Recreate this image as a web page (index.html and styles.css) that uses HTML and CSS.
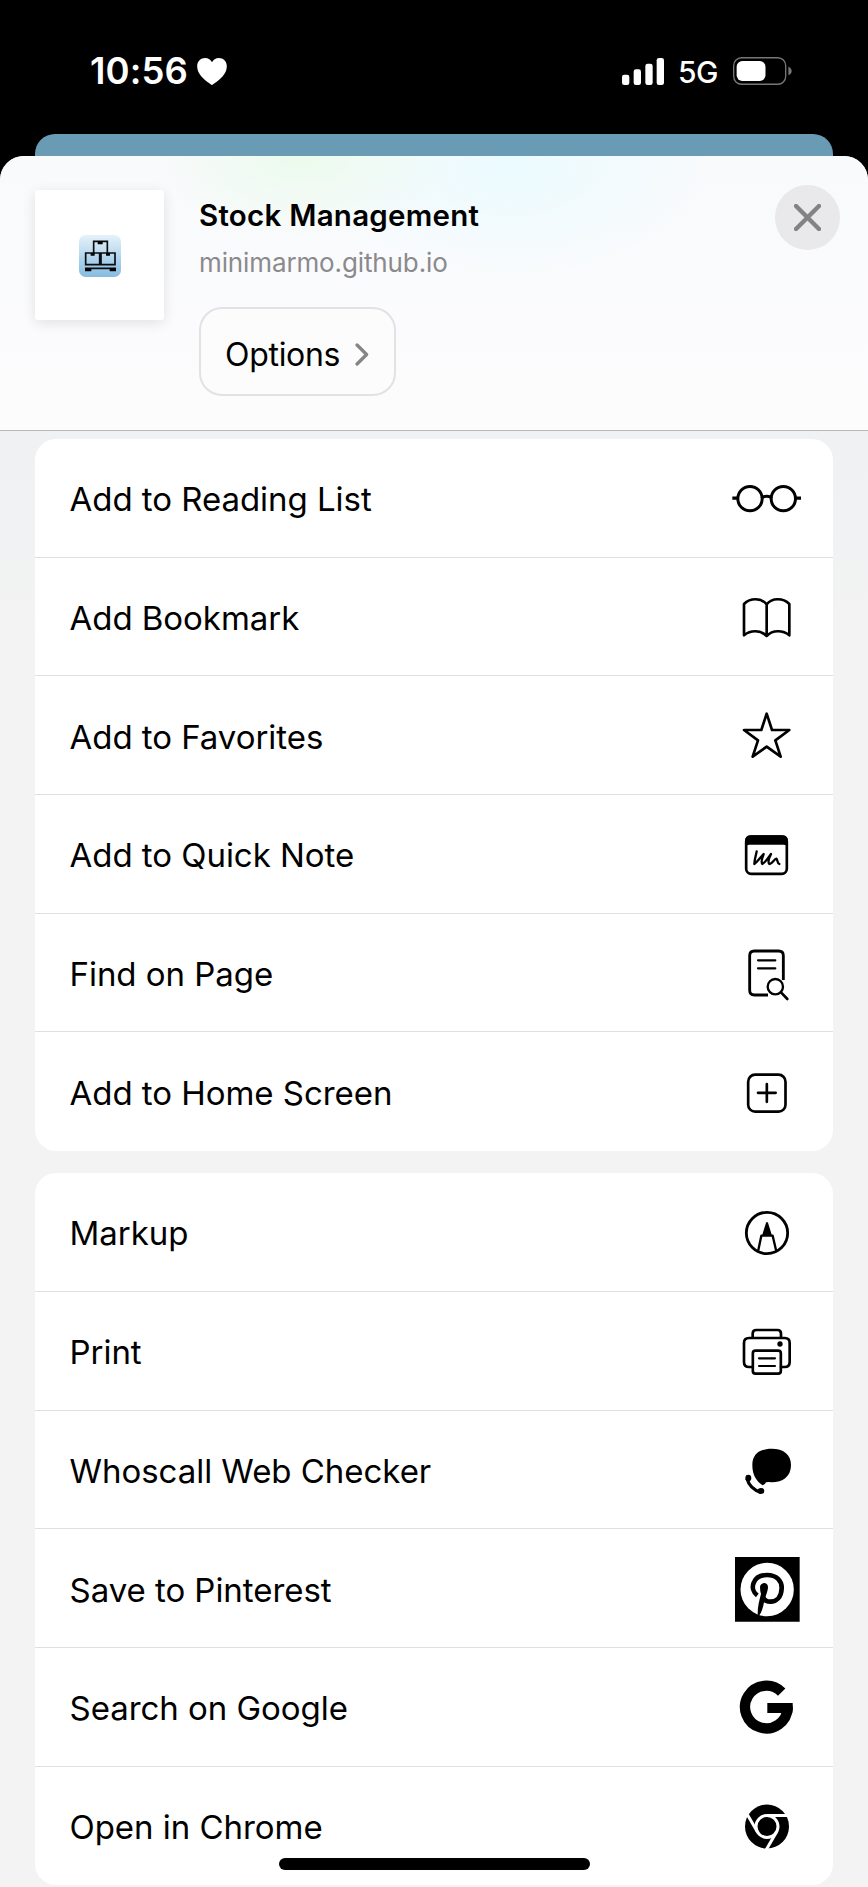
FILE: index.html
```html
<!DOCTYPE html>
<html lang="en">
<head>
<meta charset="utf-8">
<title>Share Sheet</title>
<link rel="stylesheet" href="styles.css">
</head>
<body>
<div class="screen">
  <header class="status">
    <div class="clock"><span class="time">10:56</span>
      <svg class="heart" viewBox="0 0 90 82"><path d="M45 82C38 77 0 56 0 25 0 10 11 0 24 0 34 0 41 5 45 13 49 5 56 0 66 0 79 0 90 10 90 25 90 56 52 77 45 82Z"/></svg>
    </div>
    <div class="indicators">
      <svg class="signal" viewBox="0 0 126 81"><rect y="50" width="22" height="31" rx="7"/><rect x="35" y="34" width="22" height="47" rx="7"/><rect x="70" y="17" width="22" height="64" rx="7"/><rect x="104" width="22" height="81" rx="7"/></svg>
      <span class="network">5G</span>
      <svg class="battery" viewBox="0 0 178 84"><rect class="shell" x="2" y="2" width="157" height="80" rx="24"/><rect x="11" y="12" width="87" height="60" rx="17"/><path class="cap" d="M167 29Q177 33 177 42T167 55Z"/></svg>
    </div>
  </header>
  <div class="back-card"></div>
  <main class="sheet">
    <section class="summary">
      <div class="thumb">
        <svg viewBox="0 0 126 126">
          <defs><linearGradient id="sky" x2="0" y2="1"><stop offset="0" stop-color="#e6f2f9"/><stop offset="1" stop-color="#85bce2"/></linearGradient></defs>
          <rect width="126" height="126" rx="20" fill="url(#sky)"/>
          <g fill="none" stroke="#090d10" stroke-width="5"><path d="M44 54V19H85V54M20 54H62V89H20ZM66 54H108V89H66ZM18 100H111"/></g>
          <path d="M56 19H71V28H56ZM35 54H47V62H35ZM81 54H93V62H81ZM18 100H37V109H18ZM92 100H111V109H92Z"/>
        </svg>
      </div>
      <div class="details">
        <h1 class="title">Stock Management</h1>
        <p class="host">minimarmo.github.io</p>
        <button class="options"><span>Options</span><svg viewBox="0 0 42 70"><path d="M6 6 35 35 6 64"/></svg></button>
      </div>
      <button class="close" aria-label="Close"><svg viewBox="0 0 80 80"><path d="M6 6 74 74M74 6 6 74"/></svg></button>
    </section>
    <div class="lists">
      <ul class="group">
        <li class="row"><span>Add to Reading List</span>
          <svg class="icon" viewBox="87 85 228 240"><g stroke-width="9"><circle cx="150" cy="207" r="36.500"/><circle cx="250" cy="207" r="36.500"/><path d="M187 203Q200 196 213 203"/><path stroke-width="10" d="M97 205.500H113M287 205.500H303" stroke-linecap="butt"/></g></svg></li>
        <li class="row"><span>Add Bookmark</span>
          <svg class="icon" viewBox="87 441 228 240"><path d="M200 523C184 503 151 503 132 522V616C151 600 182 599 200 618 218 599 249 600 268 616V522C249 503 216 503 200 523ZM200 523V618"/></svg></li>
        <li class="row"><span>Add to Favorites</span>
          <svg class="icon" viewBox="87 797 228 240"><path d="M200 850 216 899H268L226 930 242 979 200 949 158 979 174 930 132 899H184Z"/></svg></li>
        <li class="row"><span>Add to Quick Note</span>
          <svg class="icon" viewBox="87 72 228 240"><rect x="138.500" y="139.500" width="122" height="112" rx="15"/><path class="solid" d="M135 166V153Q135 136 152 136H247Q264 136 264 153V170Q260 164 251 164H148Q139 164 135 170Z"/><path stroke-width="7" d="M170 184C168 196 163 210 163 222 171 217 183 200 191 192 187 202 182 216 187 222 195 219 207 200 213 192 208 202 203 217 208 222 215 224 223 206 229 206 233 208 231 220 238 222"/></svg></li>
        <li class="row"><span>Find on Page</span>
          <svg class="icon" viewBox="87 428 228 240"><path stroke-width="8.500" stroke-linecap="butt" d="M204 614H163Q149 614 149 600V496Q149 482 163 482H236Q250 482 250 496V569"/><path d="M174 510H226M174 534H226" stroke-width="6.500"/><circle cx="226" cy="589" r="23" stroke-width="7"/><path stroke-width="8" d="M243 606 262 626"/></svg></li>
        <li class="row"><span>Add to Home Screen</span>
          <svg class="icon" viewBox="87 785.500 228 240"><rect x="144.500" y="853.500" width="112" height="111" rx="21"/><path d="M174 908H227M200.500 882V935"/></svg></li>
      </ul>
      <ul class="group">
        <li class="row"><span>Markup</span>
          <svg class="icon" viewBox="87 96 228 240"><circle cx="201" cy="219" r="62" stroke-width="8.500"/><path class="solid" d="M198 188Q201 184 204 188L216 227H186Z"/><path stroke-width="7" d="M175 270 184 227H218L228 270"/></svg></li>
        <li class="row"><span>Print</span>
          <svg class="icon" viewBox="87 453 228 240"><path d="M158 530V521Q158 510 169 510H232Q243 510 243 521V530"/><path d="M158 621H147Q132 621 132 606V549Q132 534 147 534H254Q269 534 269 549V606Q269 621 254 621H243"/><rect x="158.500" y="572" width="84" height="69" rx="8"/><path stroke-width="6.500" d="M177 595H225M177 618H225"/><circle class="solid" cx="240" cy="552" r="8"/></svg></li>
        <li class="row"><span>Whoscall Web Checker</span>
          <svg class="icon" viewBox="87 809 228 240"><path class="solid" d="M157 914C157 881 180 865 215 865 250 865 273 882 273 914 273 949 248 966 215 966Q207 964 198 966 195 974 188 975C170 963 157 945 157 914Z"/><path stroke-width="10" stroke-linecap="butt" d="M141 955Q150 987 183 996"/><ellipse class="solid" cx="145" cy="953" rx="9" ry="10"/><ellipse class="solid" cx="183" cy="992" rx="10" ry="9"/></svg></li>
        <li class="row"><span>Save to Pinterest</span>
          <svg class="icon" viewBox="87 85 228 240"><path class="solid" d="M105 109H299V303H105Z"/><circle class="paper" cx="201.500" cy="206.500" r="80"/><path stroke-width="14" stroke-linecap="butt" d="M172 224C146 205 159 163 201 163 230 163 246 181 245 203 244 229 230 243 211 243 199 243 192 238 189 229"/><path class="solid" d="M180 199C180 184 204 183 204 199 204 211 197 224 192 245 189 262 184 277 178 284L173 287C172 260 178 238 183 220Q180 211 180 199Z"/></svg></li>
        <li class="row"><span>Search on Google</span>
          <svg class="icon" viewBox="87 440 228 240"><path stroke-width="31" stroke-linecap="butt" d="M245 515.500A64 64 0 1 0 263 563"/><path class="solid" d="M202 548H278Q280 563 277 578H202Z"/></svg></li>
        <li class="row"><span>Open in Chrome</span>
          <svg class="icon" viewBox="87 797.500 228 240"><circle class="solid" cx="201" cy="919" r="66"/><g class="cut"><circle cx="201" cy="919" r="33"/><path id="spoke" d="M201 886H275"/><use href="#spoke" transform="rotate(120 201 919)"/><use href="#spoke" transform="rotate(240 201 919)"/></g></svg></li>
      </ul>
    </div>
  </main>
  <div class="home-bar"></div>
</div>
</body>
</html>
```
FILE: styles.css
```css
* { box-sizing: border-box; margin: 0; padding: 0; }
body { background: #000; font-family: Inter, "Liberation Sans", sans-serif; color: #000; }
.screen { position: relative; width: 868px; height: 1887px; overflow: hidden; background: #000; }
.status { display: flex; justify-content: space-between; height: 134px; padding: 46px 76px 0 90px; color: #fff; fill: #fff; }
.clock, .indicators { display: flex; align-items: center; height: 50px; }
.time { font-size: 36.5px; font-weight: 600; letter-spacing: 0.1px; }
.heart { width: 30px; height: 27px; margin-left: 9px; }
.signal { width: 42px; height: 27px; margin-right: 14px; }
.network { padding-top: 1px; font-size: 30px; font-weight: 500; letter-spacing: -0.5px; }
.battery { width: 59px; height: 28px; margin-left: 15px; }
.shell { fill: none; stroke: #777; stroke-width: 4; }
.cap { fill: #777; }
.back-card { height: 22px; margin: 0 35px; border-radius: 20px 20px 0 0; background: #699bb5; }
.sheet { height: 1731px; border-radius: 24px 24px 0 0; overflow: hidden; background: linear-gradient(#eff1f3 275px, #f3f3f3 480px); }
.summary {
  display: flex; align-items: flex-start; height: 275px; padding: 34px 28px 0 35px; border-bottom: 1px solid #b9b9bc;
  background: radial-gradient(ellipse 150px 85px at 300px 0, #ebfbed, #ebfbed00), radial-gradient(ellipse 210px 120px at 510px 10px, #ebfbff, #ebfbff00), linear-gradient(#f9fafc, #fcfcfd);
}
.thumb { display: flex; align-items: center; justify-content: center; width: 129px; height: 130px; border-radius: 3px; background: #fff; box-shadow: 0 3px 14px #0000001c; }
.thumb svg { width: 42px; height: 42px; margin-top: 2px; }
.details { flex: 1; padding: 6px 0 0 35px; }
.title { font-size: 29.5px; line-height: 38px; font-weight: 600; letter-spacing: 0.25px; }
.host { margin-top: 11px; font-size: 26px; line-height: 36px; letter-spacing: -0.12px; color: #8a8a8d; }
.options { display: flex; align-items: center; gap: 15px; width: 197px; height: 89px; margin-top: 26px; padding: 5px 0 0 24px; border: 2px solid #e2e2e4; border-radius: 23px; background: #fcfcfd; font: 400 32px Inter, sans-serif; letter-spacing: -0.3px; color: #000; }
.options svg { width: 14px; height: 23px; fill: none; stroke: #858587; stroke-width: 10; stroke-linecap: round; stroke-linejoin: round; }
.close { display: flex; align-items: center; justify-content: center; width: 65px; height: 65px; margin-top: -5px; border: 0; border-radius: 50%; background: #e9e9eb; }
.close svg { width: 27px; height: 27px; fill: none; stroke: #838385; stroke-width: 13; stroke-linecap: round; }
.lists { display: flex; flex-direction: column; gap: 22px; padding: 8px 35px 0; }
.group { list-style: none; border-radius: 21px; background: #fff; }
.row { display: flex; align-items: center; justify-content: space-between; height: 118.7px; padding: 1px 28px 0 34.500px; border-bottom: 1px solid #dfdfe1; font-size: 33px; letter-spacing: -0.04px; }
.row:last-child { border-bottom: 0; }
.row span { padding-top: 2px; }
.icon { width: 76px; height: 80px; fill: none; stroke: #000; stroke-width: 8; stroke-linecap: round; stroke-linejoin: round; }
.solid { fill: #000; stroke: none; }
.paper { fill: #fff; stroke: none; }
.cut { stroke: #fff; stroke-width: 9; stroke-linecap: butt; }
.home-bar { position: absolute; left: 279px; top: 1858px; width: 311px; height: 12px; border-radius: 6px; background: #000; }
```
